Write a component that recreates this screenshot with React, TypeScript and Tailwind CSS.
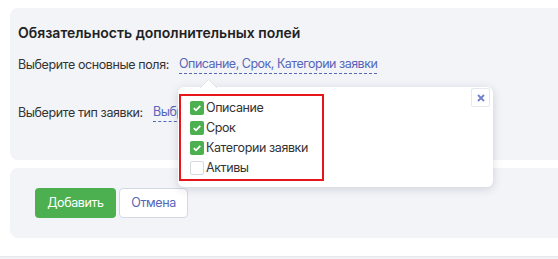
import React from 'react';

const fields = [
    { label: 'Описание', checked: true },
    { label: 'Срок', checked: true },
    { label: 'Категории заявки', checked: true },
    { label: 'Активы', checked: false },
];

const Check: React.FC<{ checked: boolean }> = ({ checked }) =>
    checked ? (
        <span className="w-[14px] h-[14px] bg-[#4caf50] rounded-[2px] flex items-center justify-center shrink-0">
            <svg width="10" height="10" viewBox="0 0 10 10">
                <path d="M1.8 5.2 L4 7.3 L8.3 2.8" fill="none" stroke="#fff" strokeWidth="1.8" />
            </svg>
        </span>
    ) : (
        <span className="w-[14px] h-[14px] bg-white border border-[#d6d9e0] rounded-[2px] shrink-0" />
    );

export default function App() {
    return (
        <div className="w-[558px] h-[259px] bg-white overflow-hidden font-['Inter',sans-serif] text-[12.5px] tracking-[-0.4px] text-[#333]">
            <div className="pt-[8px] pl-[10px] flex flex-col gap-[8px]">
                {/* Main settings panel */}
                <div className="relative bg-[#f3f4f8] rounded-l-[8px] h-[152px] px-[8px] pt-[16px]">
                    <h2 className="text-[14px] font-semibold tracking-normal text-[#222] leading-[18px] whitespace-nowrap">Обязательность дополнительных полей</h2>
                    <div className="flex mt-[14px] leading-[18px] whitespace-nowrap">
                        <span className="w-[161px]">Выберите основные поля:</span>
                        <span className="text-[#5666b8] border-b border-dashed border-[#5666b8] leading-[15px] tracking-[-0.5px]">
                            Описание, Срок, Категории заявки
                        </span>
                    </div>
                    <div className="flex mt-[30px] leading-[18px] whitespace-nowrap">
                        <span className="w-[135px]">Выберите тип заявки:</span>
                        <span className="text-[#5666b8] border-b border-dashed border-[#5666b8] leading-[15px]">Выбрать</span>
                    </div>

                    {/* Popover */}
                    <div className="absolute left-[168px] top-[79px] w-[315px] h-[100px] bg-white rounded-[6px] shadow-[0_2px_10px_rgba(40,50,80,0.18)]">
                        <svg className="absolute left-[22px] top-[-8px]" width="17" height="9" viewBox="0 0 17 9">
                            <path d="M0 9 L8.5 0.5 L17 9" fill="#fff" stroke="#e3e5ec" strokeWidth="1" />
                        </svg>
                        <button className="absolute right-[3px] top-[1px] w-[19px] h-[19px] border border-[#e6e8ee] rounded-[2px] flex items-center justify-center bg-white">
                            <svg width="8" height="8" viewBox="0 0 8 8">
                                <path d="M1 1 L7 7 M7 1 L1 7" stroke="#6f80cf" strokeWidth="1.8" />
                            </svg>
                        </button>
                        <div className="absolute left-[1px] top-[7px] w-[145px] h-[87px] border-2 border-[#e8161b] pl-[9px] pt-[2px] flex flex-col">
                            {fields.map((f) => (
                                <label key={f.label} className="flex items-center gap-[2px] h-[20px] text-[#333] whitespace-nowrap">
                                    <Check checked={f.checked} />
                                    <span>{f.label}</span>
                                </label>
                            ))}
                        </div>
                    </div>
                </div>

                {/* Actions panel */}
                <div className="bg-[#f3f4f8] rounded-l-[8px] h-[70px] pl-[25px] pt-[20px] flex gap-[3px] items-start">
                    <button className="h-[30px] w-[81px] bg-[#4caf50] text-white rounded-[4px]">Добавить</button>
                    <button className="h-[30px] w-[69px] bg-white text-[#5666b8] border border-[#d3d8e6] rounded-[4px]">Отмена</button>
                </div>
            </div>
            <div className="mt-[18px] h-[4px] bg-[#f0f1f4] border-t border-[#e6e7eb]" />
        </div>
    );
}
